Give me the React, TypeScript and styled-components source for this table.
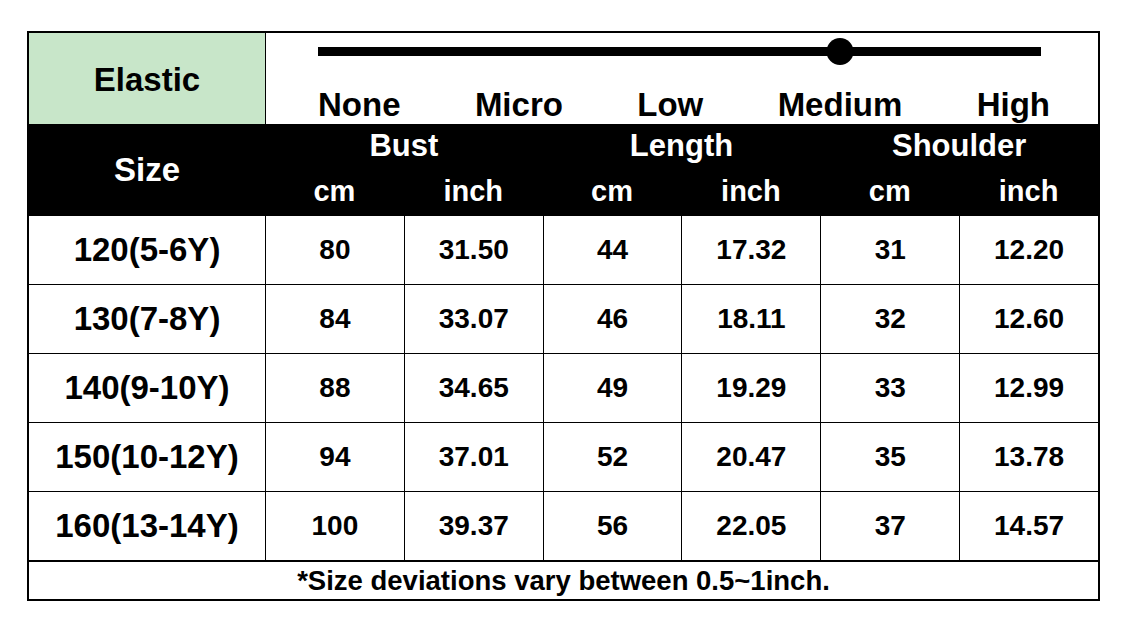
import { createGlobalStyle, styled } from 'styled-components';

const LEVELS = ['None', 'Micro', 'Low', 'Medium', 'High'];

const ROWS = [
  ['120(5-6Y)', '80', '31.50', '44', '17.32', '31', '12.20'],
  ['130(7-8Y)', '84', '33.07', '46', '18.11', '32', '12.60'],
  ['140(9-10Y)', '88', '34.65', '49', '19.29', '33', '12.99'],
  ['150(10-12Y)', '94', '37.01', '52', '20.47', '35', '13.78'],
  ['160(13-14Y)', '100', '39.37', '56', '22.05', '37', '14.57'],
];

const GROUPS = ['Bust', 'Length', 'Shoulder'];

const App = () => {
  return (
    <Page>
      <GlobalStyle />
      <Chart>
        <TopRow>
          <ElasticCell>Elastic</ElasticCell>
          <SliderCell>
            <Track>
              <Knob />
            </Track>
            <Levels>
              {LEVELS.map((level) => (
                <span key={level}>{level}</span>
              ))}
            </Levels>
          </SliderCell>
        </TopRow>

        <Header>
          <SizeHead>Size</SizeHead>
          {GROUPS.map((group) => (
            <GroupHead key={group}>{group}</GroupHead>
          ))}
          {GROUPS.map((group) => [
            <UnitHead key={`${group}-cm`}>cm</UnitHead>,
            <UnitHead key={`${group}-inch`}>inch</UnitHead>,
          ])}
        </Header>

        {ROWS.map((row) => (
          <DataRow key={row[0]}>
            {row.map((value, i) => (
              <Cell key={i} $label={i === 0}>
                {value}
              </Cell>
            ))}
          </DataRow>
        ))}

        <Footnote>*Size deviations vary between 0.5~1inch.</Footnote>
      </Chart>
    </Page>
  );
};

export default App;

const GlobalStyle = createGlobalStyle`
  body {
    margin: 0;
    background: #ffffff;
    font-family: "Liberation Sans", Arial, sans-serif;
  }

  * {
    box-sizing: border-box;
  }
`;

const Page = styled.div`
  padding: 31px 0 0 27px;
`;

const Chart = styled.div`
  width: 1073px;

  border: 2px solid #000000;

  color: #000000;
  font-weight: bold;
`;

const TopRow = styled.div`
  display: grid;
  grid-template-columns: 236px 1fr;

  height: 91px;
`;

const ElasticCell = styled.div`
  display: flex;
  align-items: center;
  justify-content: center;

  padding-top: 3px;

  font-size: 33px;

  background-color: #c8e6c9;
`;

const SliderCell = styled.div`
  display: flex;
  flex-direction: column;

  border-left: 1px solid #000000;
  padding: 5px 48px 0 52px;
`;

const Track = styled.div`
  position: relative;

  height: 27px;
  margin-right: 9px;

  &::before {
    content: '';
    position: absolute;
    top: 9px;
    left: 0;
    right: 0;

    height: 9px;

    background-color: #000000;
  }
`;

const Knob = styled.div`
  position: absolute;
  top: 0;
  left: 72.2%;

  width: 27px;
  height: 27px;

  border-radius: 50%;
  transform: translateX(-50%);

  background-color: #000000;
`;

const Levels = styled.div`
  display: flex;
  justify-content: space-between;

  margin-top: 23px;

  font-size: 33px;
  line-height: 33px;
`;

const Header = styled.div`
  display: grid;
  grid-template-columns: 236px repeat(6, 1fr);
  grid-template-rows: 44px 48px;

  color: #ffffff;

  background-color: #000000;
`;

const HeadCell = styled.div`
  display: flex;
  align-items: center;
  justify-content: center;
`;

const SizeHead = styled(HeadCell)`
  grid-row: 1 / 3;

  font-size: 33px;
`;

const GroupHead = styled(HeadCell)`
  grid-column: span 2;

  font-size: 31px;
`;

const UnitHead = styled(HeadCell)`
  padding-bottom: 2px;

  font-size: 29px;
`;

const DataRow = styled.div`
  display: grid;
  grid-template-columns: 236px repeat(6, 1fr);

  height: 69px;

  border-bottom: 1px solid #000000;
`;

const Cell = styled.div<{ $label: boolean }>`
  display: flex;
  align-items: center;
  justify-content: center;

  border-left: ${({ $label }) => ($label ? 'none' : '1px solid #000000')};

  font-size: ${({ $label }) => ($label ? '33px' : '28px')};
`;

const Footnote = styled.div`
  display: flex;
  align-items: center;
  justify-content: center;

  height: 38px;

  border-top: 1px solid #000000;

  font-size: 27.5px;
`;
